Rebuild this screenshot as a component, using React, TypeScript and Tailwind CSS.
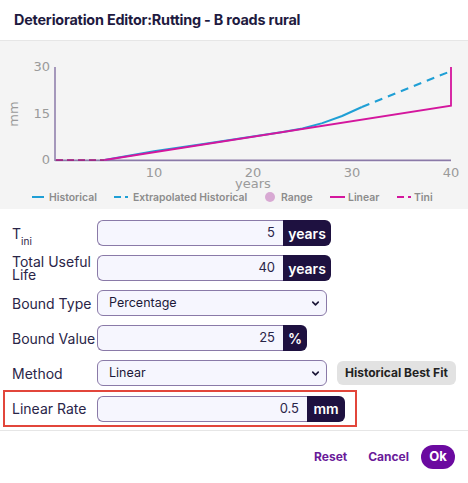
import { ChevronDown } from "lucide-react";

// chart scale helpers (page coordinates, svg viewBox starts at y=41)
const X = (yr: number) => 55 + 9.9 * yr;
const Y = (mm: number) => 160 - 3.1 * mm;

const historical: [number, number][] = [
  [5, 0], [10, 2.8], [15, 5.2], [20, 7.6], [23, 9.0], [25, 10.2], [27, 11.9], [29, 14.2], [31, 17.1],
];
const pts = (arr: [number, number][]) => arr.map(([a, b]) => `${X(a).toFixed(1)},${Y(b).toFixed(1)}`).join(" ");

function Chart() {
  const axisText = "fill-[#9a9a9a] text-[13px] [font-family:'DejaVu_Sans',sans-serif]";
  const legendText = "fill-[#8c8c8c] text-[10.4px] font-semibold [font-family:Inter,sans-serif]";
  return (
    <div className="h-[168px] bg-[#f4f4f4]">
      <svg width="468" height="168" viewBox="0 41 468 168">
        {/* axes */}
        <line x1="55" y1="67" x2="55" y2="161" stroke="#8b7aa8" strokeWidth="1.5" />
        <line x1="55" y1="160.5" x2="451" y2="160.5" stroke="#8b7aa8" strokeWidth="2" />
        <line x1="55" y1="162" x2="451" y2="162" stroke="#ffffff" strokeWidth="1" />

        {/* y labels */}
        <text x="50" y="71" textAnchor="end" className={axisText}>30</text>
        <text x="50" y="118" textAnchor="end" className={axisText}>15</text>
        <text x="50" y="164" textAnchor="end" className={axisText}>0</text>
        <text x="18" y="114" textAnchor="middle" transform="rotate(-90 18 114)" className={axisText}>mm</text>

        {/* x labels */}
        <text x="154" y="177" textAnchor="middle" className={axisText}>10</text>
        <text x="253" y="177" textAnchor="middle" className={axisText}>20</text>
        <text x="352" y="177" textAnchor="middle" className={axisText}>30</text>
        <text x="451" y="177" textAnchor="middle" className={axisText}>40</text>
        <text x="253" y="188" textAnchor="middle" className={axisText}>years</text>

        {/* series */}
        <polyline points={pts(historical)} fill="none" stroke="#1f9fd5" strokeWidth="2" />
        <line x1={X(31)} y1={Y(17.1)} x2={X(40)} y2={Y(28.7)} stroke="#1f9fd5" strokeWidth="2" strokeDasharray="8 6" />
        <line x1="56" y1="160" x2={X(5)} y2="160" stroke="#a3127a" strokeWidth="1.5" strokeDasharray="7 4" />
        <polyline points={`${X(5)},160 451,${Y(17.5)} 451,67`} fill="none" stroke="#d4169d" strokeWidth="1.8" />

        {/* legend */}
        <line x1="32" y1="197" x2="44" y2="197" stroke="#1f9fd5" strokeWidth="2" />
        <text x="49" y="201" className={legendText}>Historical</text>
        <line x1="114" y1="197" x2="121" y2="197" stroke="#1f9fd5" strokeWidth="2" />
        <line x1="125" y1="197" x2="128" y2="197" stroke="#1f9fd5" strokeWidth="2" />
        <text x="133" y="201" className={legendText}>Extrapolated Historical</text>
        <circle cx="270" cy="197" r="5" fill="#d8a9d3" />
        <text x="281" y="201" className={legendText}>Range</text>
        <line x1="330" y1="197" x2="345" y2="197" stroke="#d4169d" strokeWidth="2" />
        <text x="348" y="201" className={legendText}>Linear</text>
        <line x1="397" y1="197" x2="404" y2="197" stroke="#d4169d" strokeWidth="2" />
        <line x1="408" y1="197" x2="411" y2="197" stroke="#d4169d" strokeWidth="2" />
        <text x="414" y="201" className={legendText}>Tini</text>
      </svg>
    </div>
  );
}

function NumberField({ value, unit, inputW, unitW }: { value: string; unit: string; inputW: string; unitW: string }) {
  return (
    <div className="flex h-[26px] shrink-0">
      <div className={`${inputW} flex items-center justify-end pr-2 rounded-l-md border border-r-0 border-[#8a7aa8] bg-[#f6f6fe] text-[13px] text-[#2a2548]`}>
        {value}
      </div>
      <div className={`${unitW} flex items-center justify-center rounded-r-md bg-[#1e1140] text-white text-[14px] font-semibold`}>
        {unit}
      </div>
    </div>
  );
}

function SelectField({ value }: { value: string }) {
  return (
    <div className="w-[230px] shrink-0 h-[26px] flex items-center justify-between pl-[11px] pr-[5px] rounded-md border border-[#8a7aa8] bg-[#f6f6fe] text-[12.5px] text-[#1c1838]">
      <span>{value}</span>
      <ChevronDown className="w-[11px] h-[11px] text-[#1c1838]" strokeWidth={3.5} />
    </div>
  );
}

function Row({ label, children }: { label: React.ReactNode; children: React.ReactNode }) {
  return (
    <div className="flex items-center h-[26px]">
      <div className="w-[85px] shrink-0 text-[14px] leading-[13px] text-[#2a2548]">{label}</div>
      {children}
    </div>
  );
}

export default function App() {
  return (
    <div className="w-[468px] h-[483px] bg-white [font-family:Inter,'Liberation_Sans',sans-serif]">
      {/* Header */}
      <div className="h-[41px] flex items-center px-[14px] border-b border-[#e6e6e6]">
        <h1 className="text-[14.4px] font-bold tracking-[-0.2px] text-[#1e1a40]">Deterioration Editor:Rutting - B roads rural</h1>
      </div>

      <Chart />

      {/* Form */}
      <div className="px-3 pt-[11px] flex flex-col gap-[9px]">
        <Row label={<span>T<sub className="text-[10px] align-[-4px]">ini</sub></span>}>
          <NumberField value="5" unit="years" inputW="w-[186px]" unitW="w-[48px]" />
        </Row>
        <Row label={<span className="block">Total Useful<br />Life</span>}>
          <NumberField value="40" unit="years" inputW="w-[186px]" unitW="w-[48px]" />
        </Row>
        <Row label="Bound Type">
          <SelectField value="Percentage" />
        </Row>
        <Row label="Bound Value">
          <NumberField value="25" unit="%" inputW="w-[186px]" unitW="w-[24px]" />
        </Row>
        <Row label="Method">
          <SelectField value="Linear" />
          <button className="ml-[10px] shrink-0 whitespace-nowrap h-[24px] px-[8px] rounded-md bg-[#e2e2e2] text-[12px] font-bold text-[#222]">
            Historical Best Fit
          </button>
        </Row>
        <div className="-ml-[9px] w-[354px] h-[37px] flex items-center pl-[7px] border-2 border-[#e2463b] -mt-[5px]">
          <Row label="Linear Rate">
            <NumberField value="0.5" unit="mm" inputW="w-[210px]" unitW="w-[38px]" />
          </Row>
        </div>
      </div>

      <div className="mt-[3px] border-t border-[#e6e6e6]" />

      {/* Footer */}
      <div className="flex items-center justify-end pr-[13px] pt-[14px]">
        <button className="text-[12px] font-bold text-[#6a1b9a]">Reset</button>
        <button className="ml-[21px] text-[12px] font-bold text-[#6a1b9a]">Cancel</button>
        <button className="ml-[12px] h-[24px] w-[34px] rounded-full bg-[#6b0aa0] text-[13px] font-bold text-white">Ok</button>
      </div>
    </div>
  );
}
